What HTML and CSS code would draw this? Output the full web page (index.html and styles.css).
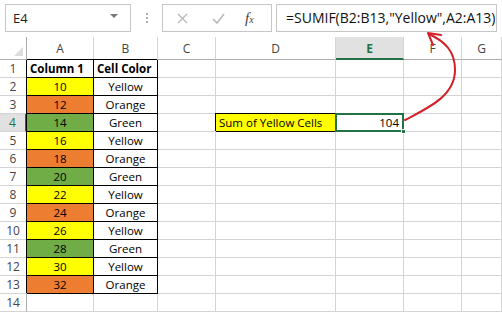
FILE: index.html
```html
<!DOCTYPE html>
<html lang="en">
<head>
  <meta charset="UTF-8">
  <meta name="viewport" content="width=device-width, initial-scale=1.0">
  <title>SUMIF by Cell Color</title>
  <link rel="stylesheet" href="styles.css">
</head>
<body>
<div class="formula-bar">
  <div class="name-box">
    <span>E4</span>
    <span class="drop"></span>
  </div>
  <div class="grip"><i></i><i></i><i></i></div>
  <div class="fx-box">
    <svg class="ico" width="11" height="11" viewBox="0 0 11 11"><path d="M1 1 L10 10 M10 1 L1 10" stroke="#b8b8b8" stroke-width="1.3" fill="none"/></svg>
    <svg class="ico" width="13" height="11" viewBox="0 0 13 11"><path d="M1 6 L5 10 L12 1" stroke="#b8b8b8" stroke-width="1.6" fill="none"/></svg>
    <span class="fx">f<sub>x</sub></span>
  </div>
  <div class="formula">=SUMIF(B2:B13,"Yellow",A2:A13)</div>
</div>

<div class="sheet">
  <!-- column headers -->
  <div class="corner"><span></span></div>
  <div class="hd">A</div><div class="hd">B</div><div class="hd">C</div><div class="hd">D</div>
  <div class="hd active">E</div><div class="hd">F</div><div class="hd">G</div>

  <!-- row 1 -->
  <div class="rh">1</div>
  <div class="c box bold">Column 1</div><div class="c box bold">Cell Color</div>
  <div class="c"></div><div class="c"></div><div class="c"></div><div class="c"></div><div class="c"></div>

  <div class="rh">2</div>
  <div class="c box ctr yellow">10</div><div class="c box ctr">Yellow</div>
  <div class="c"></div><div class="c"></div><div class="c"></div><div class="c"></div><div class="c"></div>

  <div class="rh">3</div>
  <div class="c box ctr orange">12</div><div class="c box ctr">Orange</div>
  <div class="c"></div><div class="c"></div><div class="c"></div><div class="c"></div><div class="c"></div>

  <div class="rh active">4</div>
  <div class="c box ctr green">14</div><div class="c box ctr">Green</div>
  <div class="c"></div>
  <div class="c box yellow">Sum of Yellow Cells</div>
  <div class="c num selected">104<span class="handle"></span></div>
  <div class="c"></div><div class="c"></div>

  <div class="rh">5</div>
  <div class="c box ctr yellow">16</div><div class="c box ctr">Yellow</div>
  <div class="c"></div><div class="c"></div><div class="c"></div><div class="c"></div><div class="c"></div>

  <div class="rh">6</div>
  <div class="c box ctr orange">18</div><div class="c box ctr">Orange</div>
  <div class="c"></div><div class="c"></div><div class="c"></div><div class="c"></div><div class="c"></div>

  <div class="rh">7</div>
  <div class="c box ctr green">20</div><div class="c box ctr">Green</div>
  <div class="c"></div><div class="c"></div><div class="c"></div><div class="c"></div><div class="c"></div>

  <div class="rh">8</div>
  <div class="c box ctr yellow">22</div><div class="c box ctr">Yellow</div>
  <div class="c"></div><div class="c"></div><div class="c"></div><div class="c"></div><div class="c"></div>

  <div class="rh">9</div>
  <div class="c box ctr orange">24</div><div class="c box ctr">Orange</div>
  <div class="c"></div><div class="c"></div><div class="c"></div><div class="c"></div><div class="c"></div>

  <div class="rh">10</div>
  <div class="c box ctr yellow">26</div><div class="c box ctr">Yellow</div>
  <div class="c"></div><div class="c"></div><div class="c"></div><div class="c"></div><div class="c"></div>

  <div class="rh">11</div>
  <div class="c box ctr green">28</div><div class="c box ctr">Green</div>
  <div class="c"></div><div class="c"></div><div class="c"></div><div class="c"></div><div class="c"></div>

  <div class="rh">12</div>
  <div class="c box ctr yellow">30</div><div class="c box ctr">Yellow</div>
  <div class="c"></div><div class="c"></div><div class="c"></div><div class="c"></div><div class="c"></div>

  <div class="rh">13</div>
  <div class="c box ctr orange">32</div><div class="c box ctr">Orange</div>
  <div class="c"></div><div class="c"></div><div class="c"></div><div class="c"></div><div class="c"></div>

  <div class="rh">14</div>
  <div class="c"></div><div class="c"></div>
  <div class="c"></div><div class="c"></div><div class="c"></div><div class="c"></div><div class="c"></div>
</div>

<!-- annotation arrow from E4 to the formula -->
<svg class="arrow" width="502" height="312" viewBox="0 0 502 312">
  <path d="M405 120 C428 108 455 96 455 70 C455 52 446 42 429 34" stroke="#d42026" stroke-width="2" fill="none" stroke-linecap="round"/>
  <path d="M441 35 L428 33 L433 45" stroke="#d42026" stroke-width="2" fill="none" stroke-linecap="round" stroke-linejoin="round"/>
</svg>
</body>
</html>
```

FILE: styles.css
```css
* {
  margin: 0;
  padding: 0;
  box-sizing: border-box;
}

body {
  background-color: #fff;
  font-family: 'Open Sans', 'Liberation Sans', sans-serif;
  color: #000;
  position: relative;
  width: 502px;
  height: 312px;
  overflow: hidden;
}

/* formula bar */
.formula-bar {
  display: flex;
  align-items: center;
  height: 37px;
  padding: 0 5px 1px 5px;
}

.name-box {
  width: 126px;
  height: 28px;
  border: 1px solid #c6c6c6;
  display: flex;
  align-items: center;
  justify-content: space-between;
  padding: 0 12px 0 7px;
  font-size: 13px;
  color: #222;
}

.drop {
  width: 0;
  height: 0;
  border-left: 4px solid transparent;
  border-right: 4px solid transparent;
  border-top: 4px solid #777;
  margin-top: -4px;
}

.grip {
  width: 31px;
  display: flex;
  flex-direction: column;
  align-items: center;
  gap: 2px;
}

.grip i {
  width: 2px;
  height: 2px;
  background-color: #b0b0b0;
}

.fx-box {
  width: 110px;
  height: 28px;
  border: 1px solid #c6c6c6;
  display: flex;
  align-items: center;
  padding: 0 0 0 14px;
}

.fx-box .ico:first-child {
  margin-right: 24px;
}

.fx-box .ico:nth-child(2) {
  margin-right: 20px;
}

.fx {
  font-family: 'Liberation Serif', serif;
  font-style: italic;
  font-size: 15px;
  color: #444;
}

.fx sub {
  font-size: 10px;
  vertical-align: 0;
}

.formula {
  flex: 1;
  margin-left: 4px;
  height: 28px;
  border: 1px solid #c6c6c6;
  font-size: 14px;
  line-height: 26px;
  padding-left: 9px;
  color: #111;
  white-space: nowrap;
}

/* sheet grid */
.sheet {
  display: grid;
  grid-template-columns: 27px 67px 64px 58px 120px 68px 58px 1fr;
  grid-template-rows: 23px repeat(14, 18px);
}

.corner,
.hd,
.rh,
.c {
  border-right: 1px solid #d4d4d4;
  border-bottom: 1px solid #d4d4d4;
}

.corner {
  position: relative;
  border-bottom-color: #ababab;
  border-right-color: #ababab;
}

.corner span {
  position: absolute;
  right: 3px;
  bottom: 3px;
  width: 0;
  height: 0;
  border-left: 9px solid transparent;
  border-bottom: 9px solid #dcdcdc;
}

.hd {
  border-bottom-color: #ababab;
  font-size: 12px;
  color: #444;
  text-align: center;
  line-height: 24px;
}

.hd.active {
  background-color: #e1e1e1;
  color: #217346;
  font-weight: bold;
  border-bottom: 2px solid #217346;
}

.rh {
  border-right-color: #ababab;
  font-size: 12px;
  color: #444;
  text-align: center;
  line-height: 18px;
}

.rh.active {
  background-color: #e1e1e1;
  color: #217346;
  border-right: 2px solid #217346;
}

.c {
  font-size: 11.5px;
  line-height: 17px;
  padding: 0 3px;
  white-space: nowrap;
}

.c.box {
  border-right-color: #000;
  border-bottom-color: #000;
  box-shadow: -1px -1px 0 0 #000;
}

.c.bold {
  font-weight: bold;
}

.c.ctr {
  text-align: center;
}

.c.num {
  text-align: right;
}

.yellow {
  background-color: #ffff00;
}

.orange {
  background-color: #ed7d31;
}

.green {
  background-color: #70ad47;
}

.c.selected {
  position: relative;
  padding-right: 4px;
}

.c.selected::after {
  content: '';
  position: absolute;
  top: -1px;
  left: -1px;
  right: -1px;
  bottom: -1px;
  border: 2px solid #217346;
}

.handle {
  position: absolute;
  right: -3px;
  bottom: -3px;
  width: 5px;
  height: 5px;
  background-color: #217346;
  border: 1px solid #fff;
  z-index: 1;
}

/* annotation overlay */
.arrow {
  position: absolute;
  top: 0;
  left: 0;
  pointer-events: none;
}
```
